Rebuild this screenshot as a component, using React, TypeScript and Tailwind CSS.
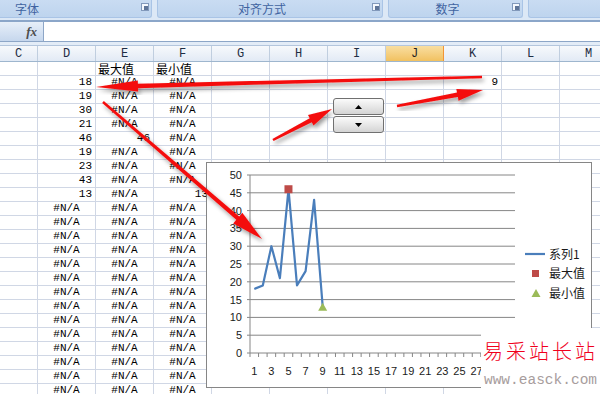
import React from "react"

const cols = ["C", "D", "E", "F", "G", "H", "I", "J", "K", "L", "M"]
const vals = [18, 19, 30, 21, 46, 19, 23, 43, 13]

type Cell = { t: string; align?: "l" | "r" | "c"; cjk?: boolean }

function buildRows(): Cell[][] {
  const out: Cell[][] = []
  for (let r = 0; r < 24; r++) {
    const row: Cell[] = cols.map(() => ({ t: "" }))
    if (r === 0) {
      row[2] = { t: "最大值", align: "l", cjk: true }
      row[3] = { t: "最小值", align: "l", cjk: true }
    } else if (r <= 9) {
      row[1] = { t: String(vals[r - 1]), align: "r" }
      row[2] = r === 5 ? { t: "46", align: "r" } : { t: "#N/A", align: "c" }
      row[3] = r === 9 ? { t: "13", align: "r" } : { t: "#N/A", align: "c" }
      if (r === 1) row[8] = { t: "9", align: "r" }
    } else {
      row[1] = { t: "#N/A", align: "c" }
      row[2] = { t: "#N/A", align: "c" }
      row[3] = { t: "#N/A", align: "c" }
    }
    out.push(row)
  }
  return out
}

function Launcher() {
  return (
    <svg width="8" height="8" viewBox="0 0 8 8" className="shrink-0">
      <rect x="0.5" y="0.5" width="7" height="7" fill="#f4f8fd" stroke="#8299bb" />
      <rect x="3" y="3" width="4" height="4" fill="#5f7598" />
    </svg>
  )
}

function arrowPoints(x1: number, y1: number, x2: number, y2: number, w: number, L: number, H: number) {
  const dx = x2 - x1
  const dy = y2 - y1
  const len = Math.hypot(dx, dy)
  const ux = dx / len
  const uy = dy / len
  const px = -uy
  const py = ux
  const bx = x2 - ux * L
  const by = y2 - uy * L
  const ws = w * 0.55
  const pts = [
    [x1 + px * ws / 2, y1 + py * ws / 2],
    [bx + px * w / 2, by + py * w / 2],
    [bx + px * H / 2, by + py * H / 2],
    [x2, y2],
    [bx - px * H / 2, by - py * H / 2],
    [bx - px * w / 2, by - py * w / 2],
    [x1 - px * ws / 2, y1 - py * ws / 2],
  ]
  return pts.map((p) => p[0].toFixed(1) + "," + p[1].toFixed(1)).join(" ")
}

function Chart() {
  const x0 = 43
  const x1 = 308
  const yTop = 12
  const yBot = 190
  const cw = (x1 - x0) / 31
  const px = (i: number) => x0 + (i - 0.5) * cw
  const py = (v: number) => yBot - v * ((yBot - yTop) / 50)
  const line = vals.map((v, i) => `${px(i + 1).toFixed(1)},${py(v).toFixed(1)}`).join(" ")

  return (
    <div className="absolute left-[206px] top-[162px] h-[226px] w-[386px] border border-[#868686] bg-white">
      <svg width="384" height="224" className="block" style={{ fontFamily: '"Liberation Sans", Arial, sans-serif' }}>
        {Array.from({ length: 11 }, (_, k) => {
          const y = yTop + k * ((yBot - yTop) / 10)
          return (
            <g key={k}>
              <line x1={x0 - 3} y1={y} x2={x1} y2={y} stroke="#868686" strokeWidth="1" />
              <text x="35" y={y + 4} fontSize="11" textAnchor="end" fill="#1a1a1a">
                {50 - k * 5}
              </text>
            </g>
          )
        })}
        <line x1={x0} y1={yTop} x2={x0} y2={yBot} stroke="#868686" />
        {Array.from({ length: 32 }, (_, k) => (
          <line key={k} x1={x0 + k * cw} y1={yBot} x2={x0 + k * cw} y2={yBot + 4} stroke="#868686" />
        ))}
        {/* labels 29 and 31 sit under the watermark, so only 1..27 are drawn */}
        {Array.from({ length: 14 }, (_, k) => {
          const n = k * 2 + 1
          return (
            <text key={n} x={px(n)} y="212" fontSize="11" textAnchor="middle" fill="#1a1a1a">
              {n}
            </text>
          )
        })}
        <polyline points={line} fill="none" stroke="#4a7ebb" strokeWidth="2.2" strokeLinejoin="round" />
        <rect x={px(5) - 4} y={py(46) - 4} width="8" height="8" fill="#be4b48" />
        <polygon
          points={`${px(9) - 4.5},${py(13) + 4} ${px(9) + 4.5},${py(13) + 4} ${px(9)},${py(13) - 4}`}
          fill="#9bbb59"
        />
        <line x1="318" y1="91" x2="338" y2="91" stroke="#4a7ebb" strokeWidth="2.2" />
        <rect x="325" y="107" width="7" height="7" fill="#be4b48" />
        <polygon points="324.5,134 333.5,134 329,126" fill="#9bbb59" />
        <g fontSize="12" fill="#1a1a1a" style={{ fontFamily: '"Noto Sans CJK SC", "Liberation Sans", sans-serif' }}>
          <text x="342" y="96">系列1</text>
          <text x="342" y="115">最大值</text>
          <text x="342" y="135">最小值</text>
        </g>
      </svg>
    </div>
  )
}

function Arrows() {
  const arrows = [
    [482, 77, 96, 87, 4.5, 42, 11],
    [397, 106, 483, 90, 4.5, 26, 12],
    [273, 140, 332, 109, 4.5, 24, 12],
    [103, 102, 262, 239, 4.5, 32, 14],
  ]
  return (
    <svg width="600" height="394" className="pointer-events-none absolute left-0 top-0">
      <defs>
        <filter id="sh" x="-20%" y="-20%" width="140%" height="140%">
          <feDropShadow dx="2" dy="3" stdDeviation="2" floodColor="#000" floodOpacity="0.4" />
        </filter>
      </defs>
      {arrows.map((a, i) => (
        <polygon key={i} points={arrowPoints(a[0], a[1], a[2], a[3], a[4], a[5], a[6])} fill="#f40d0d" filter="url(#sh)" />
      ))}
    </svg>
  )
}

export default function App() {
  const rows = buildRows()
  const mono = '"Liberation Mono", "DejaVu Sans Mono", monospace'
  const cjk = '"Noto Sans CJK SC", "Liberation Sans", sans-serif'

  return (
    <div className="relative h-[394px] w-[600px] overflow-hidden bg-white" style={{ fontFamily: cjk }}>
      {/* ribbon group labels */}
      <div className="flex h-[22px] gap-[5px] border-b-2 border-[#8ba6c9] bg-[#dce8f6]">
        <div className="flex h-[18px] w-[152px] shrink-0 items-center justify-between rounded-br-[3px] border-r border-b border-[#a9c4e6] bg-gradient-to-b from-[#c9dcf2] to-[#bed4ee] pl-[15px] pr-[2px]">
          <span className="text-[12px] leading-none text-[#4063a0]">字体</span>
          <div className="self-start pt-[3px]">
            <Launcher />
          </div>
        </div>
        <div className="relative flex h-[18px] w-[226px] shrink-0 items-center justify-center rounded-b-[3px] border-x border-b border-[#a9c4e6] bg-gradient-to-b from-[#c9dcf2] to-[#bed4ee] pr-[16px]">
          <span className="text-[12px] leading-none text-[#4063a0]">对齐方式</span>
          <div className="absolute right-[2px] top-[3px]">
            <Launcher />
          </div>
        </div>
        <div className="relative flex h-[18px] w-[135px] shrink-0 items-center justify-center rounded-b-[3px] border-x border-b border-[#a9c4e6] bg-gradient-to-b from-[#c9dcf2] to-[#bed4ee] pr-[16px]">
          <span className="text-[12px] leading-none text-[#4063a0]">数字</span>
          <div className="absolute right-[2px] top-[3px]">
            <Launcher />
          </div>
        </div>
        <div className="h-[18px] flex-1 rounded-bl-[3px] border-l border-b border-[#a9c4e6] bg-gradient-to-b from-[#c9dcf2] to-[#bed4ee]" />
      </div>

      {/* formula bar */}
      <div className="flex h-[20px] border-b border-[#8da6c7]">
        <div className="flex w-[44px] items-center justify-end border-r border-[#8da6c7] bg-gradient-to-b from-[#e7eff9] to-[#c6d7ed] pr-[6px]">
          <span className="text-[13px] font-bold italic leading-none text-[#4d4d4d]" style={{ fontFamily: '"Liberation Serif", serif' }}>
            fx
          </span>
        </div>
        <div className="flex-1 bg-white" />
      </div>
      <div className="h-[4px] border-b border-[#b4c6dd] bg-[#e3ecf7]" />

      {/* column headers */}
      <div className="grid h-[16px] grid-cols-[38px_repeat(10,58px)] border-b border-[#9eb6ce]" style={{ fontFamily: mono }}>
        {cols.map((c) => (
          <div
            key={c}
            className={
              c === "J"
                ? "flex items-center justify-center border-r border-[#f29536] bg-gradient-to-b from-[#f9dea0] to-[#f1c15f] text-[12px] leading-none text-[#1f1f1f]"
                : "flex items-center justify-center border-r border-[#c0cedf] bg-gradient-to-b from-[#f7f9fc] to-[#e2eaf5] text-[12px] leading-none text-[#1f2d44]"
            }
          >
            {c}
          </div>
        ))}
      </div>

      {/* cells */}
      <div className="grid grid-cols-[38px_repeat(10,58px)] text-[11px] text-black">
        {rows.map((row, r) =>
          row.map((cell, c) => (
            <div
              key={r + "-" + c}
              className={
                "flex h-[14px] overflow-visible whitespace-nowrap border-r border-b border-[#d0d7e5] " +
                (cell.cjk ? "items-end " : "items-center ") +
                (cell.align === "r" ? "justify-end pr-[3px]" : cell.align === "l" ? "justify-start pl-[2px]" : "justify-center")
              }
              style={{ fontFamily: cell.cjk ? cjk : mono }}
            >
              <span className={cell.cjk ? "text-[12px] leading-[12px]" : "leading-none"}>{cell.t}</span>
            </div>
          ))
        )}
      </div>

      <Chart />

      {/* spin button */}
      <div className="absolute left-[333px] top-[98px] flex w-[51px] flex-col gap-[1px]">
        <div className="flex h-[17px] items-center justify-center rounded-[3px] border border-[#707070] bg-gradient-to-b from-[#fbfbfb] to-[#d4d4d4]">
          <svg width="7" height="4" viewBox="0 0 7 4">
            <polygon points="0,4 7,4 3.5,0" fill="#000" />
          </svg>
        </div>
        <div className="flex h-[17px] items-center justify-center rounded-[3px] border border-[#707070] bg-gradient-to-b from-[#fbfbfb] to-[#d4d4d4]">
          <svg width="7" height="4" viewBox="0 0 7 4">
            <polygon points="0,0 7,0 3.5,4" fill="#000" />
          </svg>
        </div>
      </div>

      <Arrows />

      {/* watermark */}
      <div className="absolute left-[481px] top-[328px] flex h-[66px] w-[119px] flex-col items-center bg-white pt-[13px]">
        <span className="text-[20px] font-light leading-[20px] tracking-[3px] text-[#f0001c]" style={{ fontFamily: '"Noto Sans CJK SC", serif' }}>
          易采站长站
        </span>
        <span className="mt-[12px] text-[14.5px] leading-[14px] text-[#a79d9d]" style={{ fontFamily: mono }}>
          www.easck.com
        </span>
      </div>
    </div>
  )
}
